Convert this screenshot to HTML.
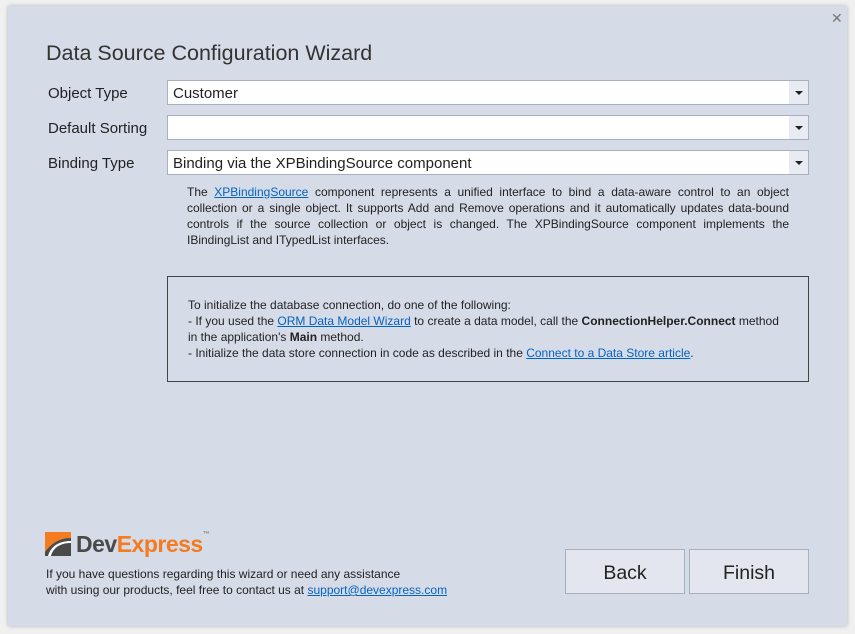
<!DOCTYPE html><html><head><style>
body{margin:0;width:855px;height:634px;background:#f0f0f0;font-family:"Segoe UI","Liberation Sans",sans-serif;position:relative;overflow:hidden}
.dlg{position:absolute;left:8px;top:6px;width:839px;height:620px;background:#d6dbe8;box-shadow:0 0 4px rgba(0,0,0,.25)}
.a{position:absolute}
h1{position:absolute;left:46px;top:41px;margin:0;font-weight:normal;font-size:21.5px;color:#333}
.lbl{position:absolute;left:48px;font-size:15px;color:#222}
.cb{position:absolute;left:167px;width:635px;height:23px;background:#fff;border:1px solid #a9b0bd;font-size:15px;color:#222;line-height:25px;padding-left:5px;box-sizing:content-box}
.cb .btn{position:absolute;right:0;top:0;width:19px;height:23px;background:#e8ebf2}
.cb .btn:after{content:"";position:absolute;left:6px;top:10px;border-left:4px solid transparent;border-right:4px solid transparent;border-top:4px solid #222}
.txt{font-size:12px;color:#222;line-height:16px}
a{color:#0563c1;text-decoration:underline}
.box{position:absolute;left:167px;top:276px;width:640px;height:104px;border:1px solid #444}
.bt{position:absolute;top:549px;width:118px;height:43px;border:1px solid #a9b0bd;background:#e3e6ee;font-size:19.5px;color:#222;text-align:center;line-height:46px}
</style></head><body>
<div class="dlg"></div>
<div class="a" style="left:831px;top:10px;font-size:14px;color:#777">✕</div>
<h1>Data Source Configuration Wizard</h1>
<div class="lbl" style="top:85px">Object Type</div>
<div class="lbl" style="top:120px">Default Sorting</div>
<div class="lbl" style="top:155px">Binding Type</div>
<div class="cb" style="top:80px">Customer<div class="btn"></div></div>
<div class="cb" style="top:115px"><div class="btn"></div></div>
<div class="cb" style="top:150px">Binding via the XPBindingSource component<div class="btn"></div></div>
<div class="a txt" style="left:187px;top:184px;width:602px;text-align:justify">The <a>XPBindingSource</a> component represents a unified interface to bind a data-aware control to an object collection or a single object. It supports Add and Remove operations and it automatically updates data-bound controls if the source collection or object is changed. The XPBindingSource component implements the IBindingList and ITypedList interfaces.</div>
<div class="box"></div>
<div class="a txt" style="left:188px;top:297px;width:600px">To initialize the database connection, do one of the following:<br>- If you used the <a>ORM Data Model Wizard</a> to create a data model, call the <b>ConnectionHelper.Connect</b> method in the application's <b>Main</b> method.<br>- Initialize the data store connection in code as described in the <a>Connect to a Data Store article</a>.</div>
<svg class="a" style="left:45px;top:532px" width="26" height="24"><rect width="26" height="24" fill="#4a4a4a"/><path d="M0 0H26V6C14 6 6 12 0 20Z" fill="#f37b20"/><path d="M3 24C6 14 14 9 26 9V11C15 11 8 16 6 24Z" fill="#fff"/></svg>
<div class="a" style="left:76px;top:531px;font-size:23px;font-weight:bold;color:#4a4a4a;letter-spacing:-0.5px">Dev<span style="color:#f37b20">Express</span><span style="font-size:7px;vertical-align:top;color:#888">™</span></div>
<div class="a" style="left:46px;top:566px;font-size:12px;color:#222;line-height:16px">If you have questions regarding this wizard or need any assistance<br>with using our products, feel free to contact us at <a>support@devexpress.com</a></div>
<div class="bt" style="left:565px">Back</div>
<div class="bt" style="left:689px">Finish</div>
</body></html>
